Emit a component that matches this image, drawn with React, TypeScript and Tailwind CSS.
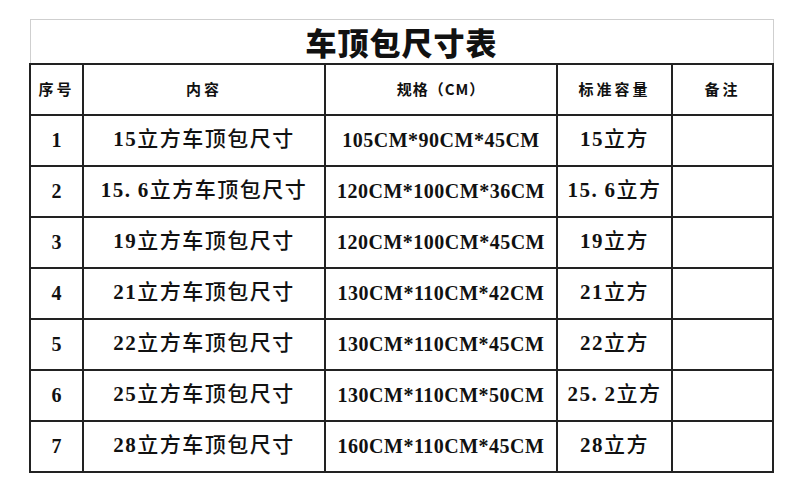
const rows = [
  { no: '1', name: '15立方车顶包尺寸', spec: '105CM*90CM*45CM', cap: '15立方' },
  { no: '2', name: '15.6立方车顶包尺寸', spec: '120CM*100CM*36CM', cap: '15.6立方' },
  { no: '3', name: '19立方车顶包尺寸', spec: '120CM*100CM*45CM', cap: '19立方' },
  { no: '4', name: '21立方车顶包尺寸', spec: '130CM*110CM*42CM', cap: '21立方' },
  { no: '5', name: '22立方车顶包尺寸', spec: '130CM*110CM*45CM', cap: '22立方' },
  { no: '6', name: '25立方车顶包尺寸', spec: '130CM*110CM*50CM', cap: '25.2立方' },
  { no: '7', name: '28立方车顶包尺寸', spec: '160CM*110CM*45CM', cap: '28立方' },
];

const headers = ['序号', '内容', '规格（CM）', '标准容量', '备注'];

// numbers bold serif, chinese medium; the dot in "15.6" gets a wide cell like the source font
function Label({ text }: { text: string }) {
  const m = text.match(/^([\d.]+)(.*)$/);
  if (!m) return <>{text}</>;
  const [a, b] = m[1].split('.');
  return (
    <>
      <span className="font-bold">
        {a}
        {b !== undefined && (
          <>
            <span className="inline-block w-[13px] text-left">.</span>
            {b}
          </>
        )}
      </span>
      <span className="font-medium">{m[2]}</span>
    </>
  );
}

function App() {
  return (
    <div className="w-[800px] h-[489px] bg-white pt-[19px] pl-[29px] font-['Liberation_Serif','Noto_Sans_CJK_SC',serif] text-[#111]">
      <table className="border-collapse table-fixed w-[743px]">
        <colgroup>
          <col className="w-[53px]" />
          <col className="w-[242px]" />
          <col className="w-[232px]" />
          <col className="w-[115px]" />
          <col className="w-[101px]" />
        </colgroup>
        <thead>
          <tr className="h-[44px]">
            <th
              colSpan={5}
              className="border border-[#cfcfcf] border-b-2 border-b-[#222] text-center text-[31px] font-black leading-none tracking-[1px] font-['Noto_Sans_CJK_SC',sans-serif]"
            >
              车顶包尺寸表
            </th>
          </tr>
          <tr className="h-[51px]">
            {headers.map((h) => (
              <th
                key={h}
                className={`border-2 border-[#222] text-center text-[15px] font-bold font-['Noto_Sans_CJK_SC',sans-serif] ${
                  h.includes('CM') ? 'tracking-[1px]' : 'tracking-[3px]'
                }`}
              >
                {h}
              </th>
            ))}
          </tr>
        </thead>
        <tbody>
          {rows.map((r) => (
            <tr key={r.no} className="h-[51px]">
              <td className="border-2 border-[#222] text-center text-[20px] font-bold">{r.no}</td>
              <td className="border-2 border-[#222] text-center text-[21px] tracking-[1.5px]">
                <Label text={r.name} />
              </td>
              <td className="border-2 border-[#222] text-center text-[20px] font-bold tracking-[0.5px]">{r.spec}</td>
              <td className="border-2 border-[#222] text-center text-[21px] tracking-[1.5px]">
                <Label text={r.cap} />
              </td>
              <td className="border-2 border-[#222]" />
            </tr>
          ))}
        </tbody>
      </table>
    </div>
  );
}

export default App;
